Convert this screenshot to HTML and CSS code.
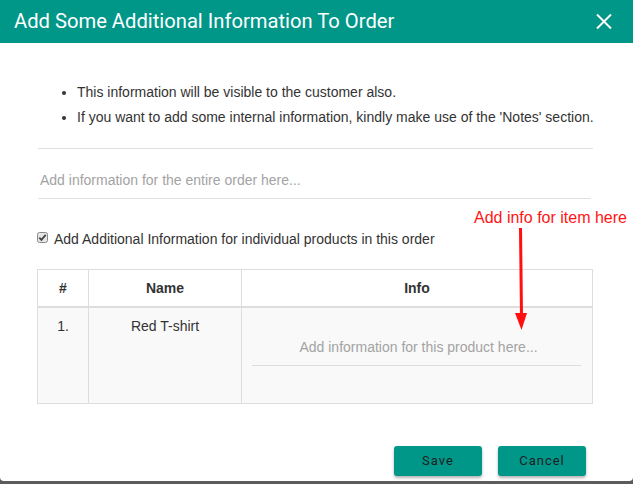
FILE: index.html
```html
<!DOCTYPE html>
<html>
<head>
<meta charset="utf-8">
<link rel="stylesheet" href="styles.css">
</head>
<body>
<div class="modal">
  <div class="header">
    <span class="title">Add Some Additional Information To Order</span>
    <svg class="close" width="16" height="15" viewBox="0 0 16 15"><path d="M1 0.5 L15 14.5 M15 0.5 L1 14.5" stroke="#fff" stroke-width="2" fill="none"/></svg>
  </div>
  <div class="content">
    <ul class="notes">
      <li>This information will be visible to the customer also.</li>
      <li>If you want to add some internal information, kindly make use of the 'Notes' section.</li>
    </ul>
    <div class="rule"></div>
    <div class="order-input">Add information for the entire order here...</div>
    <div class="check-row">
      <span class="check"><svg width="11" height="11" viewBox="0 0 11 11"><rect x="0.5" y="0.5" width="10" height="10" rx="2" fill="#e6e6e6" stroke="#8a8a8a"/><path d="M2.3 5.6 L4.4 7.8 L8.7 2.9" stroke="#444" stroke-width="1.8" fill="none"/></svg></span>
      <span class="check-label">Add Additional Information for individual products in this order</span>
    </div>
    <table class="items">
      <thead>
        <tr><th class="c-num">#</th><th class="c-name">Name</th><th class="c-info">Info</th></tr>
      </thead>
      <tbody>
        <tr>
          <td class="c-num">1.</td>
          <td class="c-name">Red T-shirt</td>
          <td class="c-info"><div class="item-input">Add information for this product here...</div></td>
        </tr>
      </tbody>
    </table>
    <div class="actions">
      <button class="btn">Save</button>
      <button class="btn">Cancel</button>
    </div>
  </div>
  <div class="annotation">
    <span class="anno-text">Add info for item here</span>
    <svg class="anno-arrow" width="16" height="104" viewBox="0 0 16 104"><path d="M5.5 0 L6.5 88" stroke="#ff0f0f" stroke-width="3" fill="none"/><path d="M0 85 L12 85 L6.5 102 Z" fill="#ff0f0f"/></svg>
  </div>
</div>
</body>
</html>
```
FILE: styles.css
```css
html, body {
  margin: 0;
  padding: 0;
}
body {
  background: #5c5c5c;
  width: 633px;
  height: 484px;
  overflow: hidden;
  font-family: "Liberation Sans", Arial, sans-serif;
}
.modal {
  position: relative;
  width: 633px;
  height: 481px;
  background: #fff;
  border-radius: 0 0 4px 4px;
}
.header {
  height: 43px;
  background: #009688;
  display: flex;
  align-items: center;
  justify-content: space-between;
  padding: 0 21px 1px 14px;
  box-sizing: border-box;
}
.title {
  font-family: Roboto, sans-serif;
  font-size: 20.2px;
  color: #fff;
  line-height: 24px;
}
.close {
  display: block;
  margin-top: 1px;
}
.content {
  padding: 0 40px 0 37px;
}
.notes {
  margin: 37px 0 0 0;
  padding-left: 40px;
  font-size: 14px;
  line-height: 25px;
  color: #333;
  white-space: nowrap;
}
.rule {
  margin: 18px 0 0 1px;
  height: 1px;
  background: #e0e0e0;
}
.order-input {
  margin-left: 1px;
  margin-right: 2px;
  padding: 21px 2px 8px 2px;
  line-height: 20px;
  font-size: 14px;
  color: #a3a3a3;
  border-bottom: 1px solid #e0e0e0;
}
.check-row {
  margin-top: 30px;
  display: flex;
  align-items: center;
  height: 20px;
}
.check {
  display: block;
  width: 11px;
  height: 11px;
  margin-right: 6px;
  margin-top: -3px;
}
.check svg { display: block; }
.check-label {
  font-size: 14px;
  color: #333;
}
.items {
  margin-top: 20px;
  width: 556px;
  border-collapse: collapse;
  font-size: 14px;
  color: #333;
}
.items th {
  height: 36px;
  padding: 0;
  font-weight: bold;
  text-align: center;
  border: 1px solid #ddd;
  border-bottom: 2px solid #ddd;
  background: #fff;
}
.items td {
  height: 96px;
  padding: 8px 0 0 0;
  box-sizing: border-box;
  vertical-align: top;
  text-align: center;
  line-height: 20px;
  border: 1px solid #ddd;
  background: #f9f9f9;
}
.c-num { width: 50px; }
.c-name { width: 152px; }
.items td.c-info { padding: 8px 11px 0 10px; }
.item-input {
  padding: 21px 0 8px 4px;
  line-height: 20px;
  color: #a3a3a3;
  border-bottom: 1px solid #ddd;
}
.actions {
  display: flex;
  justify-content: flex-end;
  gap: 16px;
  margin-top: 42px;
  padding-right: 7px;
}
.btn {
  width: 88px;
  height: 30px;
  border: none;
  border-radius: 3px;
  background: #009688;
  color: #1f1f1f;
  font-family: Roboto, sans-serif;
  font-size: 13px;
  letter-spacing: 1px;
  box-shadow: 0 2px 3px rgba(0,0,0,0.3);
  padding: 0;
}
.annotation {
  position: absolute;
  left: 474px;
  top: 207px;
  width: 160px;
}
.anno-text {
  display: block;
  font-size: 16px;
  line-height: 22px;
  color: #ff1414;
  white-space: nowrap;
}
.anno-arrow {
  position: absolute;
  left: 41px;
  top: 21px;
}
```
